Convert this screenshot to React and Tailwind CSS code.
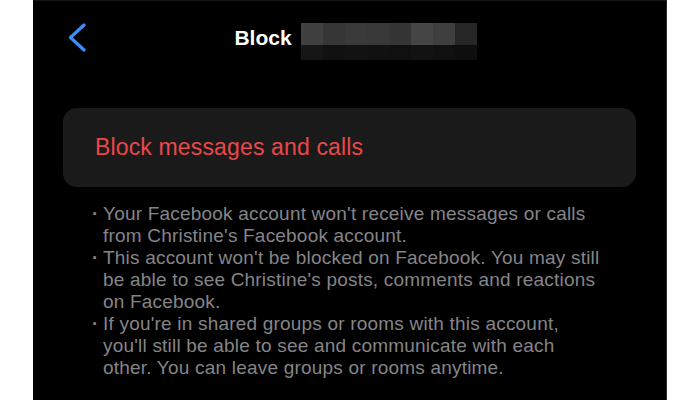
import React from 'react';

const blurTop = ['#404040', '#363636', '#3a3a3a', '#383838', '#353535', '#454545', '#3f3f3f', '#262626'];
const blurBottom = ['#161616', '#111111', '#121212', '#111111', '#101010', '#121212', '#101010', '#0e0e0e'];

const bullets = [
  ["Your Facebook account won't receive messages or calls", "from Christine's Facebook account."],
  [
    "This account won't be blocked on Facebook. You may still",
    "be able to see Christine's posts, comments and reactions",
    'on Facebook.',
  ],
  [
    "If you're in shared groups or rooms with this account,",
    "you'll still be able to see and communicate with each",
    'other. You can leave groups or rooms anytime.',
  ],
];

function BackChevron() {
  return (
    <svg width="18" height="29" viewBox="0 0 18 29" fill="none">
      <path
        d="M16 2 L2.5 14.5 L16 27"
        stroke="#3b8ff6"
        strokeWidth="3.2"
        strokeLinecap="round"
        strokeLinejoin="round"
      />
    </svg>
  );
}

export default function App() {
  return (
    <div
      className="w-[700px] h-[400px] bg-white flex justify-center overflow-hidden"
      style={{ fontFamily: '"Liberation Sans", Arial, sans-serif' }}
    >
      <div className="w-[634px] h-full bg-black border-r border-[#2a2a2a] border-t border-t-[#151515] flex flex-col">
        {/* Header */}
        <div className="h-[73px] flex items-center px-[35px]">
          <div className="w-[18px] flex items-center">
            <BackChevron />
          </div>
          <div className="flex-1 flex items-center justify-center pl-[12px]">
            <span className="text-white text-[21px] font-bold leading-none">Block</span>
            <div className="ml-[9px] mt-[7px] flex flex-col">
              <div className="flex">
                {blurTop.map((c, i) => (
                  <div key={i} className="w-[22px] h-[22px]" style={{ backgroundColor: c }} />
                ))}
              </div>
              <div className="flex">
                {blurBottom.map((c, i) => (
                  <div key={i} className="w-[22px] h-[15px]" style={{ backgroundColor: c }} />
                ))}
              </div>
            </div>
          </div>
          <div className="w-[18px]" />
        </div>

        {/* Action card */}
        <div className="mx-[30px] mt-[34px] h-[79px] rounded-[14px] bg-[#1a1a1b] flex items-center pl-[32px]">
          <span className="text-[#ea4848] text-[23px] tracking-[0.15px]">Block messages and calls</span>
        </div>

        {/* Info bullets */}
        <div className="mt-[16px] pl-[59px] text-[#858589] text-[19px] leading-[22px] tracking-[0.2px]">
          {bullets.map((lines, i) => (
            <div key={i} className="flex">
              <span className="w-[11px] shrink-0 font-bold">·</span>
              <div>
                {lines.map((l, j) => (
                  <div key={j} className="whitespace-nowrap">
                    {l}
                  </div>
                ))}
              </div>
            </div>
          ))}
        </div>
      </div>
    </div>
  );
}
